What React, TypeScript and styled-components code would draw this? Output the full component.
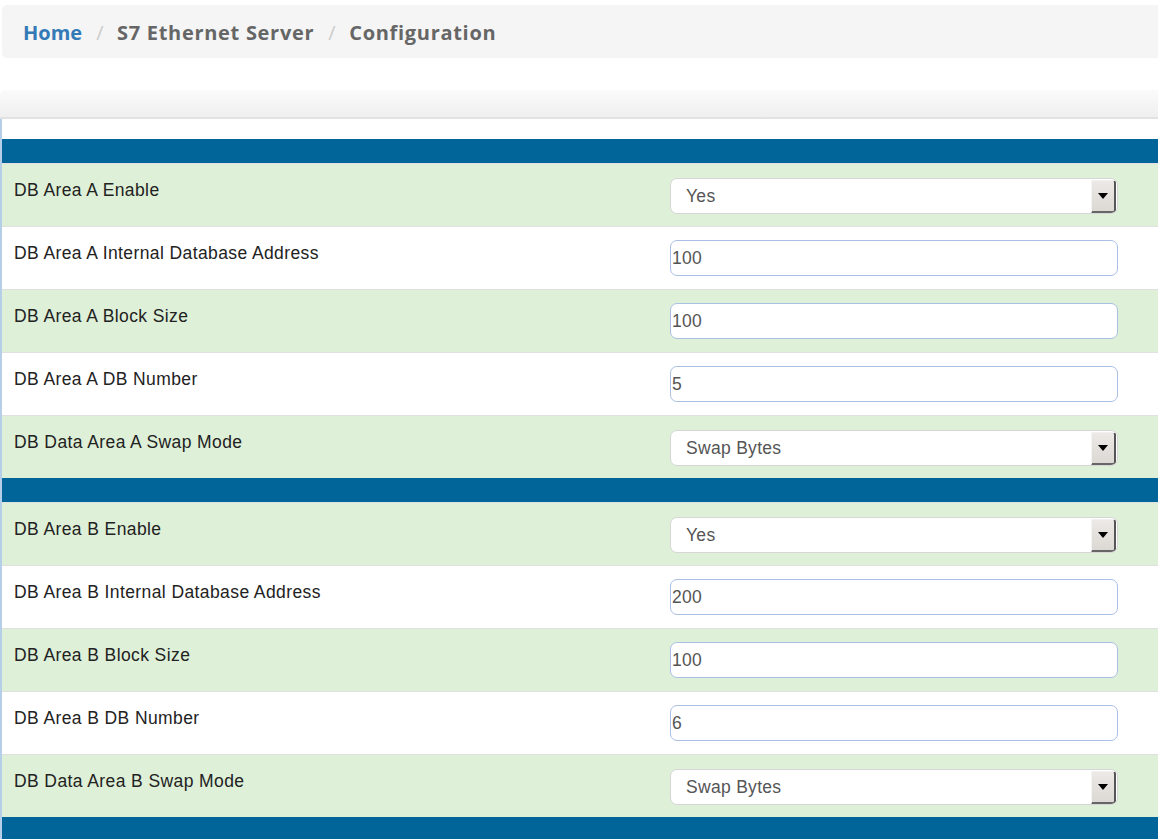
import React from "react";
import styled, { createGlobalStyle } from "styled-components";

const Global = createGlobalStyle`
  html, body { margin: 0; padding: 0; background: #fff; }
  body { font-family: "Liberation Sans", Arial, sans-serif; overflow: hidden; }
  * { box-sizing: border-box; }
`;

const Page = styled.div`
  width: 1158px;
  height: 839px;
  overflow: hidden;
  display: flex;
  flex-direction: column;
  & > * { flex-shrink: 0; }
`;

const Breadcrumb = styled.nav`
  margin: 5px 0 0 2px;
  height: 53px;
  background: #f5f5f5;
  border-radius: 5px 0 0 5px;
  display: flex;
  align-items: center;
  padding: 1px 0 0 21px;
  font-family: "Open Sans", "DejaVu Sans", sans-serif;
  font-weight: 700;
  font-size: 20px;
  letter-spacing: 0.6px;
  color: #666;
`;

const Crumb = styled.span<{ $link?: boolean }>`
  color: ${(p) => (p.$link ? "#337ab7" : "#666")};
  letter-spacing: ${(p) => (p.$link ? "0" : "0.7px")};
`;

const Sep = styled.span`
  color: #ccc;
  font-weight: 400;
  padding: 0 13px 0 14px;
`;

const Panel = styled.section`
  margin-top: 32px;
  display: flex;
  flex-direction: column;
  & > * { flex-shrink: 0; }
`;

const PanelHeading = styled.div`
  height: 29px;
  background: linear-gradient(#fbfbfb, #efefef);
  border-top-left-radius: 5px;
  border-bottom: 2px solid #e2e2e2;
`;

const PanelBody = styled.div`
  border-left: 2px solid #b6cfe8;
  padding-top: 20px;
  display: flex;
  flex-direction: column;
  & > * { flex-shrink: 0; }
`;

const SectionBar = styled.div`
  height: 24px;
  background: #02659a;
`;

const Row = styled.div<{ $green: boolean }>`
  height: 63px;
  display: flex;
  align-items: flex-start;
  background: ${(p) => (p.$green ? "#dff0d8" : "#fff")};
  border-top: 1px solid #e0e0e0;
`;

const Label = styled.div`
  width: 668px;
  padding: 16px 0 0 12px;
  font-size: 17.5px;
  letter-spacing: 0.4px;
  color: #222;
`;

const TextInput = styled.input`
  margin-top: 13px;
  width: 448px;
  height: 36px;
  border: 1px solid #a9c0e4;
  border-radius: 7px;
  padding: 0 0 0 1px;
  font-family: "Liberation Sans", Arial, sans-serif;
  font-size: 17.5px;
  letter-spacing: 0.3px;
  color: #555;
  background: #fff;
  outline: none;
`;

const SelectBox = styled.div`
  margin-top: 14px;
  width: 448px;
  height: 36px;
  border: 1px solid #d6d6d6;
  border-radius: 7px;
  background: #fff;
  display: flex;
  align-items: center;
  overflow: hidden;
`;

const NativeSelect = styled.select`
  flex: 1;
  height: 100%;
  appearance: none;
  -webkit-appearance: none;
  border: none;
  background: transparent;
  padding-left: 15px;
  font-family: "Liberation Sans", Arial, sans-serif;
  font-size: 17.5px;
  letter-spacing: 0.3px;
  color: #555;
  outline: none;
`;

const DropButton = styled.div`
  width: 25px;
  height: 33px;
  margin-right: 1px;
  background: linear-gradient(#ece9e6, #dcd8d4);
  border-left: 1px solid #f4f4f4;
  border-top: 1px solid #f0f0f0;
  border-right: 2px solid #555;
  border-bottom: 2px solid #666;
  border-radius: 0 3px 3px 0;
  display: flex;
  align-items: center;
  justify-content: center;
`;

type Field =
  | { label: string; kind: "select"; value: string; options: string[] }
  | { label: string; kind: "input"; value: string };

const makeArea = (a: string, addr: string, db: string): Field[] => [
  { label: `DB Area ${a} Enable`, kind: "select", value: "Yes", options: ["Yes", "No"] },
  { label: `DB Area ${a} Internal Database Address`, kind: "input", value: addr },
  { label: `DB Area ${a} Block Size`, kind: "input", value: "100" },
  { label: `DB Area ${a} DB Number`, kind: "input", value: db },
  {
    label: `DB Data Area ${a} Swap Mode`,
    kind: "select",
    value: "Swap Bytes",
    options: ["No Swapping", "Swap Bytes", "Swap Words", "Swap Words and Bytes"],
  },
];

const areas: Field[][] = [makeArea("A", "100", "5"), makeArea("B", "200", "6")];

const Arrow = () => (
  <svg width="10" height="6" viewBox="0 0 10 6">
    <path d="M0 0 L10 0 L5 6 Z" fill="#000" />
  </svg>
);

const FieldRow = ({ f, green }: { f: Field; green: boolean }) => (
  <Row $green={green}>
    <Label>{f.label}</Label>
    {f.kind === "select" ? (
      <SelectBox>
        <NativeSelect defaultValue={f.value}>
          {f.options.map((o) => (
            <option key={o}>{o}</option>
          ))}
        </NativeSelect>
        <DropButton>
          <Arrow />
        </DropButton>
      </SelectBox>
    ) : (
      <TextInput defaultValue={f.value} />
    )}
  </Row>
);

export default function App() {
  return (
    <Page>
      <Global />
      <Breadcrumb>
        <Crumb $link>Home</Crumb>
        <Sep>/</Sep>
        <Crumb>S7 Ethernet Server</Crumb>
        <Sep>/</Sep>
        <Crumb>Configuration</Crumb>
      </Breadcrumb>
      <Panel>
        <PanelHeading />
        <PanelBody>
          {areas.map((fields, i) => (
            <React.Fragment key={i}>
              <SectionBar />
              {fields.map((f, j) => (
                <FieldRow key={f.label} f={f} green={j % 2 === 0} />
              ))}
            </React.Fragment>
          ))}
          <SectionBar />
        </PanelBody>
      </Panel>
    </Page>
  );
}
